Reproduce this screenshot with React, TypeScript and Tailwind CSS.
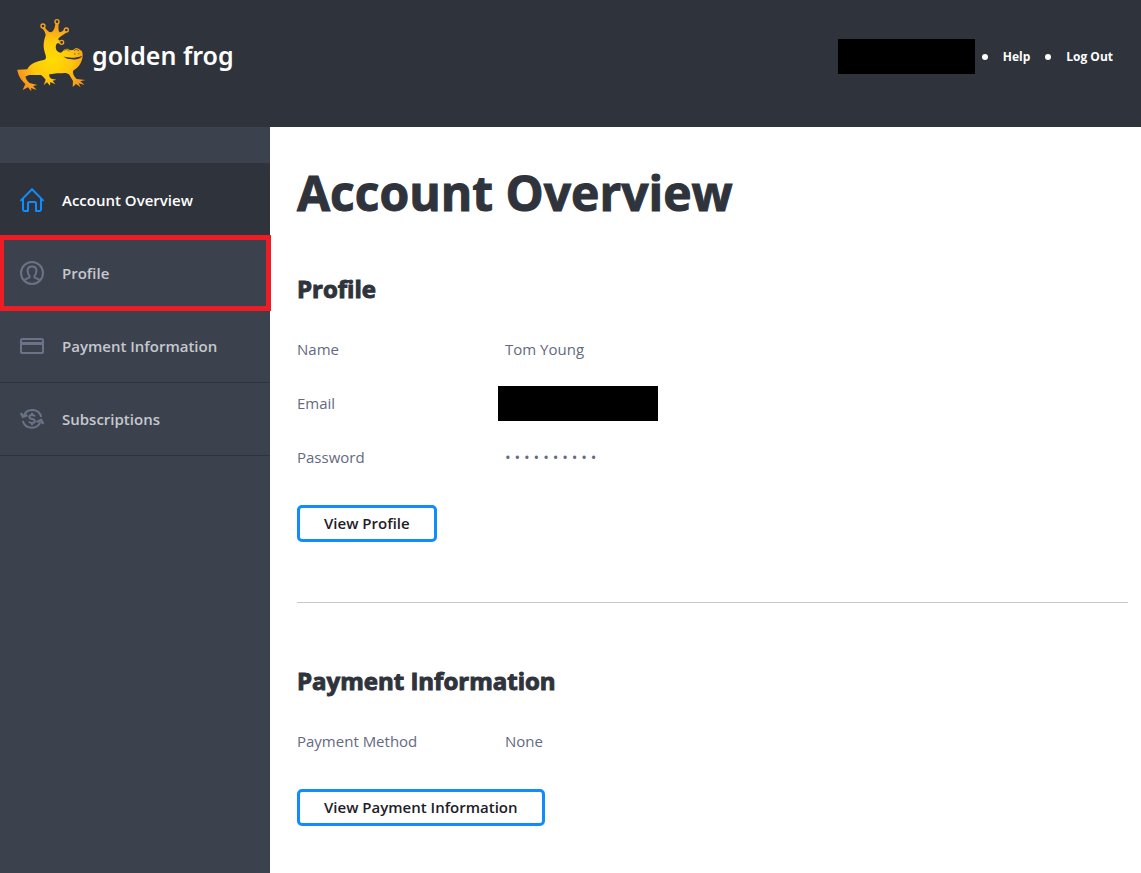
import React from 'react';

interface IconProps {
    className?: string;
}

const HomeIcon: React.FC<IconProps> = ({ className }) => (
    <svg className={className} viewBox="0 0 24 24" fill="none" stroke="currentColor" strokeWidth="2" strokeLinecap="round" strokeLinejoin="round">
        <path d="M1 12.4 12 1.2l11 11.2" />
        <path d="M3 11v10.6c0 .9.5 1.4 1.4 1.4H8v-7.6c0-.9.5-1.4 1.4-1.4h5.2c.9 0 1.4.5 1.4 1.4V23h3.6c.9 0 1.4-.5 1.4-1.4V11" />
    </svg>
);

const ProfileIcon: React.FC<IconProps> = ({ className }) => (
    <svg className={className} viewBox="0 0 24 24" fill="none" stroke="currentColor" strokeWidth="2" strokeLinejoin="round">
        <circle cx="12" cy="12" r="11" />
        <path d="M4.4 19.6c.5-1.2 1.6-1.8 3-2.2 1.4-.4 2.3-.8 2.3-1.7 0-.7-.5-1.2-1-2-.8-1.2-1.1-2.5-1.1-4 0-2.8 1.8-4.3 4.4-4.3s4.4 1.5 4.4 4.3c0 1.500-.3 2.800-1.100 4-.5.8-1 1.300-1 2 0 .9.900 1.300 2.300 1.700 1.400.4 2.500 1 3 2.200" />
    </svg>
);

const CardIcon: React.FC<IconProps> = ({ className }) => (
    <svg className={className} viewBox="0 0 24 24" fill="none" stroke="currentColor" strokeWidth="2">
        <rect x="1" y="5" width="22" height="14" rx="1.6" />
        <path d="M1 9.5h22" strokeWidth="3" />
    </svg>
);

const RenewIcon: React.FC<IconProps> = ({ className }) => (
    <svg className={className} viewBox="0 0 24 24" fill="none" stroke="currentColor" strokeWidth="2">
        <path d="M3.8 8.6A9.2 9.2 0 0 1 21.2 10" />
        <path d="M2.8 14A9.4 9.4 0 0 0 20.4 15.2" />
        <path d="M.8 6 3 9.8l4.4-1.6M23.3 17l-2.3-4-4.4 2" strokeWidth="2.4" />
        <path d="M14.9 9.4c-.4-.9-1.5-1.4-2.9-1.4-1.7 0-2.7.7-2.7 1.9 0 2.9 5.6 1.3 5.6 4.2 0 1.2-1.2 1.9-2.9 1.9-1.6 0-2.7-.5-3.1-1.5M12 5.8V8M12 16v2.2" />
    </svg>
);

const FrogLogo: React.FC<IconProps> = ({ className }) => (
    <svg className={className} viewBox="15 21 216 228" aria-hidden="true">
        <defs>
            <radialGradient id="frog" gradientUnits="userSpaceOnUse" cx="125" cy="150" r="110">
                <stop offset="0" stopColor="#ffdd00" />
                <stop offset=".55" stopColor="#fec60d" />
                <stop offset="1" stopColor="#f7941d" />
            </radialGradient>
        </defs>
        {/* raised arm, back, head and belly */}
        <path
            fill="url(#frog)"
            d="M96 54 103 50C109 58 115 66 122 67 130 65 134 57 136 41L146 41C145 55 145 64 149 67 153 67 158 63 163 58L171 66C163 73 151 79 146 85 143 89 146 92 152 93L149 101C143 99 140 100 138 106 135 117 141 127 151 128 154 128 156 127 158 124 162 115 174 114 179 121L190 120C194 113 206 113 210 120 216 121 218 127 218 134 218 154 207 173 188 182 172 190 154 190 140 190 110 197 84 194 58 195 47 199 36 199 22 180L52 178C58 162 76 155 104 149 110 146 108 138 105 130 98 108 101 93 107 76 107 68 102 61 96 54Z"
        />
        {/* legs and feet */}
        <g fill="url(#frog)">
            <path d="M22 179 56 180 58 193 46 200C50 211 55 217 61 220L82 225 69 228 80 240 63 234 64 244 54 232 38 240 46 222C33 209 24 196 22 179Z" />
            <path d="M84 188 118 190C116 198 119 203 124 206L139 209 128 212 136 223 121 216 120 227 111 217 101 226 107 209C101 200 94 195 84 188Z" />
            <path d="M160 186 190 179C187 189 190 197 200 207L226 210 211 214 224 225 206 220 212 232 198 222 188 231 189 213 177 193Z" />
        </g>
        <g fill="#2f333b" stroke="#f8a51b" strokeWidth="4">
            <circle cx="99" cy="48" r="6" />
            <circle cx="141" cy="35" r="6" />
            <circle cx="169" cy="60" r="6" />
            <circle cx="155" cy="97" r="6" />
        </g>
        <path d="M160 139c14 6 38 6 56-1-5 12-31 13-49 6" fill="#2f333b" />
        <path d="M160 123c4-6 13-6 17 1M192 122c4-5 12-4 15 1M192 132h4M205 131h3" fill="none" stroke="#7d5b18" strokeWidth="3" />
    </svg>
);

const NAV_ITEMS = [
    { label: 'Account Overview', Icon: HomeIcon, active: true, outlined: false },
    { label: 'Profile', Icon: ProfileIcon, active: false, outlined: true },
    { label: 'Payment Information', Icon: CardIcon, active: false, outlined: false },
    { label: 'Subscriptions', Icon: RenewIcon, active: false, outlined: false },
];

const Header: React.FC = () => (
    <header className="flex items-start justify-between bg-[#2f333b] pl-[15px] pr-7 h-[127px] shrink-0">
        <a href="#" className="flex items-center gap-[5px] pt-[17px] text-white">
            <FrogLogo className="w-[72px] h-[76px]" />
            <span className="font-['Noto_Sans',sans-serif] text-[25px] leading-8 font-semibold">golden frog</span>
        </a>
        <div className="flex items-center pt-[39px] text-white">
            <div className="w-[137px] h-[35px] bg-black" />
            <nav className="flex items-center gap-[15px] pl-[7px] text-xs font-bold">
                <span className="size-1.5 rounded-full bg-white" />
                <a href="#">Help</a>
                <span className="size-1.5 rounded-full bg-white" />
                <a href="#">Log Out</a>
            </nav>
        </div>
    </header>
);

const Sidebar: React.FC = () => (
    <aside className="w-[270px] shrink-0 bg-[#3c424d] pt-9">
        <ul className="border-t border-[#2f333b]">
            {NAV_ITEMS.map(({ label, Icon, active, outlined }) => (
                <li key={label} className="relative border-b border-[#2f333b]">
                    <a
                        href="#"
                        className={`flex items-center gap-[18px] h-[72px] pl-5 text-[15px] font-semibold ${
                            active ? 'bg-[#2f333b] text-white' : 'text-[#c5c8cf]'
                        }`}
                    >
                        <Icon className={`size-6 ${active ? 'text-[#108cff]' : 'text-[#6b7387]'}`} />
                        {label}
                    </a>
                    {outlined && (
                        <div className="absolute -top-0.5 left-0 -right-px -bottom-0.5 border-[5px] border-l-4 border-[#ee1c25] pointer-events-none" />
                    )}
                </li>
            ))}
        </ul>
    </aside>
);

interface RowProps {
    label: string;
    children: React.ReactNode;
}

const Row: React.FC<RowProps> = ({ label, children }) => (
    <div className="flex items-center h-6">
        <dt className="w-52 shrink-0">{label}</dt>
        <dd>{children}</dd>
    </div>
);

interface SectionProps {
    title: string;
    action: string;
    children: React.ReactNode;
}

const Section: React.FC<SectionProps> = ({ title, action, children }) => (
    <section>
        <h2 className="text-2xl leading-8 font-bold text-[#2f333b] [-webkit-text-stroke:1px_#2f333b]">{title}</h2>
        <dl className="mt-8 flex flex-col gap-[30px] text-[15px] leading-6 text-[#646a80]">{children}</dl>
        <button
            type="button"
            className="mt-9 h-[37px] px-6 border-3 border-[#108cff] rounded-[5px] bg-white text-[15px] font-semibold text-[#1d2026]"
        >
            {action}
        </button>
    </section>
);

const App: React.FC = () => {
    return (
        <div className="min-h-screen flex flex-col bg-white font-['Open_Sans',sans-serif]">
            <Header />
            <div className="flex flex-1">
                <Sidebar />
                <main className="flex-1 min-w-0 pt-9 pb-9 pl-[27px] pr-[13px]">
                    <h1 className="mb-[50px] text-5xl leading-[60px] font-bold text-[#2f333b] [-webkit-text-stroke:1px_#2f333b]">
                        Account Overview
                    </h1>
                    <Section title="Profile" action="View Profile">
                        <Row label="Name">Tom Young</Row>
                        <Row label="Email">
                            <div className="-ml-[7px] w-40 h-[35px] bg-black" />
                        </Row>
                        <Row label="Password">• • • • • • • • • •</Row>
                    </Section>
                    <hr className="mt-[60px] mb-[62px] border-[#c5c8cf]" />
                    <Section title="Payment Information" action="View Payment Information">
                        <Row label="Payment Method">None</Row>
                    </Section>
                </main>
            </div>
        </div>
    );
};

export default App;
